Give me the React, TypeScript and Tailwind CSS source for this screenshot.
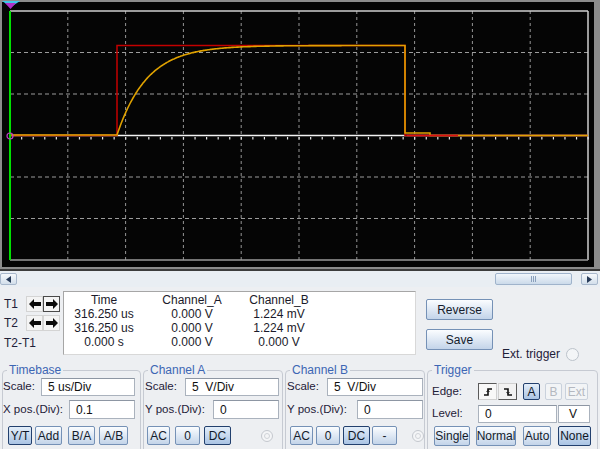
import clsx from "clsx";
import { ReactNode } from "react";

const L = 10;
const R = 588;
const T = 11;
const B = 260;
const CY = 135.5;
const DX = (R - L) / 10;
const DY = (B - T) / 6;

const yellowPoints = (() => {
  const pts: string[] = [`${L},135`, `117,135`];
  for (let x = 117; x <= 405; x += 1) {
    const y = 135 - 89.5 * (1 - Math.exp(-(x - 117) / 30));
    pts.push(`${x},${y.toFixed(1)}`);
  }
  pts.push("405,45.5", "405,133", "430,133", "430,135.5", `${R},135.5`);
  return pts.join(" ");
})();

const Screen = () => (
  <svg width={600} height={269} className="block">
    <rect x={0} y={0} width={600} height={269} fill="#8c8c8c" />
    <rect x={2} y={2} width={592} height={265} fill="#050505" />
    {/* grid */}
    {Array.from({ length: 9 }, (_, i) => (
      <line
        key={`v${i}`}
        x1={L + DX * (i + 1)}
        x2={L + DX * (i + 1)}
        y1={T}
        y2={B}
        stroke="#969696"
        strokeDasharray="3 3"
      />
    ))}
    {[1, 2, 4, 5].map((j) => (
      <line
        key={`h${j}`}
        x1={L}
        x2={R}
        y1={T + DY * j}
        y2={T + DY * j}
        stroke="#9c9c9c"
        strokeDasharray="4 3"
      />
    ))}
    <line x1={L} x2={R} y1={T} y2={T} stroke="#cfcfcf" strokeWidth={1.5} />
    <line x1={R} x2={R} y1={T} y2={B} stroke="#cfcfcf" strokeWidth={1.5} />
    <line x1={L} x2={R} y1={B} y2={B} stroke="#9a9a9a" strokeWidth={1.5} />
    <line x1={L} x2={R} y1={CY} y2={CY} stroke="#f2f2f2" strokeWidth={1.5} />
    {Array.from({ length: 50 }, (_, i) => (
      <rect
        key={`t${i}`}
        x={L + (DX / 5) * (i + 1) - 0.5}
        y={137}
        width={1.2}
        height={2.5}
        fill="#e8e8e8"
      />
    ))}
    {/* traces */}
    <polyline
      points={`${L},135.5 117,135.5 117,45.5 405,45.5 405,135.5 ${R},135.5`}
      fill="none"
      stroke="#c40000"
      strokeWidth={1.5}
    />
    <polyline points={yellowPoints} fill="none" stroke="#e0a200" strokeWidth={1.6} />
    <line x1={407} x2={458} y1={135.5} y2={135.5} stroke="#e01010" strokeWidth={1.5} />
    <line x1={L} x2={L} y1={T} y2={B} stroke="#00e000" strokeWidth={2} />
    {/* markers */}
    <polygon points="2,1 20,1 11,7" fill="#3fc8e8" />
    <polygon points="5,3 16,3 10.5,9" fill="#b030c8" />
    <circle cx={L} cy={136} r={3} fill="none" stroke="#c040c8" strokeWidth={1.2} />
  </svg>
);

const ScrollBar = () => (
  <div className="flex h-[18px] items-center border-t-2 border-[#3c3c3c] bg-[#e9eef3]">
    <div className="flex h-[12px] w-[17px] items-center justify-center rounded-[2px] border border-[#a8b8cc] bg-linear-to-b from-[#f6f9fc] to-[#d3dfeb]">
      <svg width={5} height={7}>
        <polygon points="5,0 0,3.5 5,7" fill="#283c5a" />
      </svg>
    </div>
    <div className="ml-[478px] flex h-[12px] w-[77px] items-center justify-center gap-[1px] rounded-[2px] border border-[#9fb3cb] bg-linear-to-b from-[#f1f6fb] to-[#cbdaea]">
      <span className="h-[6px] w-[1px] bg-[#8aa0bc]" />
      <span className="h-[6px] w-[1px] bg-[#8aa0bc]" />
      <span className="h-[6px] w-[1px] bg-[#8aa0bc]" />
    </div>
    <div className="ml-[9px] flex h-[12px] w-[17px] items-center justify-center rounded-[2px] border border-[#a8b8cc] bg-linear-to-b from-[#f6f9fc] to-[#d3dfeb]">
      <svg width={5} height={7}>
        <polygon points="0,0 5,3.5 0,7" fill="#283c5a" />
      </svg>
    </div>
  </div>
);

const Arrow = ({ dir, pressed }: { dir: "l" | "r"; pressed?: boolean }) => (
  <div
    className={clsx(
      "flex h-[16px] w-[17px] items-center justify-center border bg-[#f4f4f4]",
      pressed ? "border-[#4a4a4a]" : "border-[#d4d4d4]"
    )}
  >
    <svg width={12} height={10} viewBox="0 0 12 10">
      <polygon
        points={dir === "l" ? "0,5 5,0 5,3 12,3 12,7 5,7 5,10" : "12,5 7,0 7,3 0,3 0,7 7,7 7,10"}
        fill="#0a0a0a"
      />
    </svg>
  </div>
);

const Btn = ({
  className,
  pressed,
  disabled,
  children,
}: {
  className: string;
  pressed?: boolean;
  disabled?: boolean;
  children: ReactNode;
}) => (
  <div
    className={clsx(
      "flex shrink-0 items-center justify-center rounded-[2px] border text-[12px] leading-none",
      disabled
        ? "border-[#c9d1dc] bg-[#f2f4f6] text-[#b4b8c0]"
        : pressed
          ? "border-[#22406e] bg-linear-to-b from-[#e4eef9] to-[#aac4e4] text-[#101828]"
          : "border-[#7591b6] bg-linear-to-b from-[#fbfdff] to-[#c3d4e9] text-[#141c2c]",
      className
    )}
  >
    {children}
  </div>
);

const Input = ({ className, children }: { className: string; children: ReactNode }) => (
  <div
    className={clsx(
      "flex shrink-0 items-center border border-[#aab2bd] border-t-[#8d96a3] bg-white pl-[6px] text-[12px] text-[#101010]",
      className
    )}
  >
    {children}
  </div>
);

const Radio = ({ className }: { className: string }) => (
  <div
    className={clsx(
      "flex h-[12px] w-[12px] shrink-0 items-center justify-center rounded-full border border-[#c4c8ce] bg-[#f4f5f7]",
      className
    )}
  >
    <div className="h-[6px] w-[6px] rounded-full border border-[#d0d3d8]" />
  </div>
);

const Group = ({
  title,
  className,
  children,
}: {
  title: string;
  className: string;
  children: ReactNode;
}) => (
  <fieldset
    className={clsx("h-[110px] shrink-0 rounded-[4px] border border-[#c6cad2]", className)}
  >
    <legend className="ml-[4px] px-[2px] text-[12px] leading-[14px] text-[#3c66b4]">
      {title}
    </legend>
    {children}
  </fieldset>
);

const Label = ({ className, children }: { className: string; children: ReactNode }) => (
  <div className={clsx("shrink-0 text-[11.5px] text-[#1e2038]", className)}>{children}</div>
);

const EdgeIcon = ({ rising }: { rising?: boolean }) => (
  <svg width={10} height={10} viewBox="0 0 10 10">
    <polyline
      points={rising ? "1,8 5,8 5,2 9,2" : "1,2 5,2 5,8 9,8"}
      fill="none"
      stroke="#101010"
      strokeWidth={1.6}
    />
    <polyline
      points={rising ? "3.5,5 5,3.5 6.5,5" : "3.5,5 5,6.5 6.5,5"}
      fill="none"
      stroke="#101010"
      strokeWidth={1}
    />
  </svg>
);

const rows = [
  ["316.250 us", "0.000 V", "1.224 mV"],
  ["316.250 us", "0.000 V", "1.224 mV"],
  ["0.000 s", "0.000 V", "0.000 V"],
];

export default function App() {
  return (
    <div
      className="h-[449px] w-[600px] overflow-hidden bg-[#edeff2] text-[#1e2038]"
      style={{ fontFamily: '"Liberation Sans", Arial, sans-serif' }}
    >
      <Screen />
      <ScrollBar />

      {/* cursor readout */}
      <div className="flex h-[76px] items-start">
        <div className="w-[63px] shrink-0 pt-[9px] text-[12px]">
          <div className="flex h-[16px] items-center">
            <span className="w-[26px] pl-[4px]">T1</span>
            <Arrow dir="l" />
            <Arrow dir="r" pressed />
          </div>
          <div className="mt-[3px] flex h-[16px] items-center">
            <span className="w-[26px] pl-[4px]">T2</span>
            <Arrow dir="l" />
            <Arrow dir="r" />
          </div>
          <div className="mt-[5px] h-[14px] pl-[4px] leading-[14px]">T2-T1</div>
        </div>
        <div className="mt-[4px] grid h-[64px] w-[353px] shrink-0 grid-cols-[80px_96px_78px] content-start border border-[#a6a6a6] border-r-[#d8d8d8] border-b-[#d8d8d8] bg-white pt-[1px] text-center text-[12px] leading-[14px] text-[#1a1a2a]">
          <div>Time</div>
          <div>Channel_A</div>
          <div>Channel_B</div>
          {rows.map((r, i) =>
            r.map((c, j) => <div key={`${i}-${j}`}>{c}</div>)
          )}
        </div>
        <div className="ml-[10px] mt-[12px] flex flex-col">
          <Btn className="h-[21px] w-[67px]">Reverse</Btn>
          <Btn className="mt-[9px] h-[21px] w-[67px]">Save</Btn>
        </div>
        <div className="ml-[9px] mt-[58px] flex items-center text-[12px]">
          <span>Ext. trigger</span>
          <div className="ml-[6px] h-[13px] w-[13px] rounded-full border border-[#bcc3cb] bg-[#f3f5f7]" />
        </div>
      </div>

      {/* control groups */}
      <div className="flex pl-[2px]">
        <Group title="Timebase" className="w-[139px]">
          <div className="mt-[1px] flex items-center">
            <Label className="w-[38px]">Scale:</Label>
            <Input className="h-[18px] w-[94px]">5 us/Div</Input>
          </div>
          <div className="mt-[4px] flex items-center">
            <Label className="w-[66px]">X pos.(Div):</Label>
            <Input className="h-[19px] w-[66px]">0.1</Input>
          </div>
          <div className="mt-[7px] flex pl-[5px]">
            <Btn pressed className="h-[19px] w-[24px]">Y/T</Btn>
            <Btn className="ml-[3px] h-[19px] w-[27px]">Add</Btn>
            <Btn className="ml-[6px] h-[19px] w-[27px]">B/A</Btn>
            <Btn className="ml-[4px] h-[19px] w-[29px]">A/B</Btn>
          </div>
        </Group>

        <Group title="Channel A" className="ml-[2px] w-[140px]">
          <div className="mt-[1px] flex items-center pl-[1px]">
            <Label className="w-[40px]">Scale:</Label>
            <Input className="h-[18px] w-[94px]">5&nbsp; V/Div</Input>
          </div>
          <div className="mt-[4px] flex items-center pl-[1px]">
            <Label className="w-[68px]">Y pos.(Div):</Label>
            <Input className="h-[19px] w-[66px]">0</Input>
          </div>
          <div className="mt-[7px] flex items-center pl-[3px]">
            <Btn className="h-[19px] w-[23px]">AC</Btn>
            <Btn className="ml-[5px] h-[19px] w-[25px]">0</Btn>
            <Btn pressed className="ml-[4px] h-[19px] w-[27px]">DC</Btn>
            <Radio className="ml-[30px]" />
          </div>
        </Group>

        <Group title="Channel B" className="ml-[2px] w-[140px]">
          <div className="mt-[1px] flex items-center pl-[1px]">
            <Label className="w-[40px]">Scale:</Label>
            <Input className="h-[18px] w-[96px]">5&nbsp; V/Div</Input>
          </div>
          <div className="mt-[4px] flex items-center pl-[1px]">
            <Label className="w-[70px]">Y pos.(Div):</Label>
            <Input className="h-[19px] w-[66px]">0</Input>
          </div>
          <div className="mt-[7px] flex items-center pl-[4px]">
            <Btn className="h-[19px] w-[23px]">AC</Btn>
            <Btn className="ml-[3px] h-[19px] w-[24px]">0</Btn>
            <Btn pressed className="ml-[3px] h-[19px] w-[27px]">DC</Btn>
            <Btn className="ml-[2px] h-[19px] w-[25px]">-</Btn>
            <Radio className="ml-[15px]" />
          </div>
        </Group>

        <Group title="Trigger" className="ml-[2px] w-[171px]">
          <div className="mt-[6px] flex h-[17px] items-center pl-[4px]">
            <Label className="w-[46px]">Edge:</Label>
            <div className="flex h-[17px] w-[19px] items-center justify-center border border-[#5a5a5a] border-r-[#d0d0d0] border-b-[#d0d0d0] bg-[#f8f8f8]">
              <EdgeIcon rising />
            </div>
            <div className="ml-[1px] flex h-[17px] w-[19px] items-center justify-center border border-[#d0d0d0] border-r-[#5a5a5a] border-b-[#5a5a5a] bg-[#f2f2f2]">
              <EdgeIcon />
            </div>
            <Btn pressed className="ml-[6px] h-[17px] w-[17px]">A</Btn>
            <Btn disabled className="ml-[5px] h-[17px] w-[17px]">B</Btn>
            <Btn disabled className="ml-[3px] h-[17px] w-[23px]">Ext</Btn>
          </div>
          <div className="mt-[5px] flex items-center pl-[4px]">
            <Label className="w-[46px]">Level:</Label>
            <Input className="h-[18px] w-[79px]">0</Input>
            <Input className="ml-[1px] h-[18px] w-[32px] pl-[10px]">V</Input>
          </div>
          <div className="mt-[3px] flex pl-[6px]">
            <Btn className="h-[20px] w-[36px]">Single</Btn>
            <Btn className="ml-[6px] h-[20px] w-[40px]">Normal</Btn>
            <Btn className="ml-[7px] h-[20px] w-[28px]">Auto</Btn>
            <Btn pressed className="ml-[7px] h-[20px] w-[33px]">None</Btn>
          </div>
        </Group>
      </div>
    </div>
  );
}
